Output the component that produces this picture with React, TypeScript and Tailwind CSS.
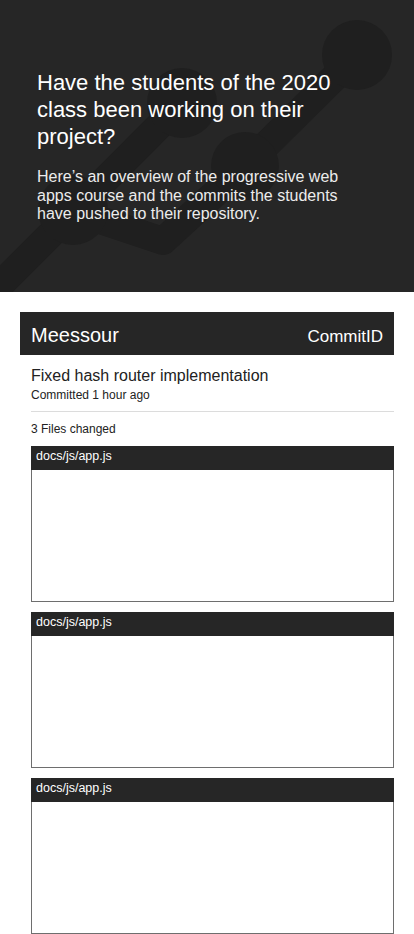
import React from "react";

const files = ["docs/js/app.js", "docs/js/app.js", "docs/js/app.js"];

function GraphBackdrop() {
  return (
    <svg
      className="absolute inset-0 h-full w-full"
      viewBox="0 0 414 292"
      fill="none"
      aria-hidden="true"
    >
      <g stroke="#1f1f1f" strokeWidth="28" strokeLinejoin="round" strokeLinecap="round">
        <path d="M-30 315 L182 103" />
        <path d="M73 211 L163 241 L245 166 L357 55" />
      </g>
      <g fill="#1f1f1f">
        <circle cx="357" cy="55" r="35" />
        <circle cx="182" cy="103" r="35" />
        <circle cx="245" cy="166" r="34" />
        <circle cx="73" cy="210" r="35" />
      </g>
    </svg>
  );
}

function FileBox({ name }: { name: string }) {
  return (
    <div className="flex h-[156px] flex-col">
      <div className="h-[24px] bg-[#262626] pl-[5px] text-[12.5px] leading-[20px] text-white">{name}</div>
      <div className="flex-1 border border-t-0 border-[#6e6e6e] bg-white" />
    </div>
  );
}

export default function App() {
  return (
    <div className="min-h-screen bg-white font-['Liberation_Sans',Arial,sans-serif]">
      <header className="relative h-[292px] overflow-hidden bg-[#262626]">
        <GraphBackdrop />
        <div className="relative px-[37px] pt-[69px]">
          <h1 className="text-[22px] leading-[27px] font-normal text-white">
            Have the students of the 2020 class been working on their project?
          </h1>
          <p className="mt-[18px] w-[326px] text-[16px] leading-[18.5px] text-[#ececec]">
            Here’s an overview of the progressive web apps course and the commits the students have pushed to their
            repository.
          </p>
        </div>
      </header>

      <main className="mx-[20px] mt-[20px]">
        <div className="flex h-[43px] items-baseline justify-between bg-[#262626] px-[11px] pt-[11px] text-white">
          <span className="text-[20px] leading-[24px]">Meessour</span>
          <span className="text-[17px] leading-[24px]">CommitID</span>
        </div>

        <div className="pl-[11px] text-[#222]">
          <h2 className="mt-[11px] text-[16px] leading-[20px] font-normal">Fixed hash router implementation</h2>
          <p className="mt-[1px] text-[12px] leading-[16px]">Committed 1 hour ago</p>
          <div className="mt-[8px] h-px bg-[#dcdcdc]" />
          <p className="mt-[9px] text-[12px] leading-[16px]">3 Files changed</p>

          <div className="mt-[9px] flex flex-col gap-[10px]">
            {files.map((f, i) => (
              <FileBox key={i} name={f} />
            ))}
          </div>
        </div>
      </main>
    </div>
  );
}
